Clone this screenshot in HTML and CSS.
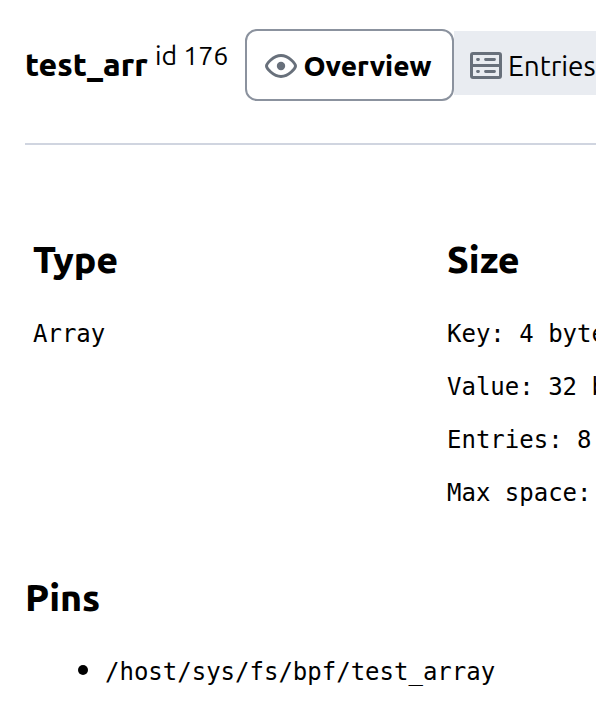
FILE: index.html
```html
<!DOCTYPE html>
<html lang="en">
<head>
<meta charset="utf-8">
<title>test_arr</title>
<link rel="stylesheet" href="styles.css">
</head>
<body>
<header class="head">
  <h1 class="name">test_arr</h1>
  <span class="map-id">id 176</span>
  <nav class="tabs">
    <a class="tab active">
      <svg class="icon" viewBox="0 0 32 32"><path d="M1.500 16C1.500 14 8 5.500 16 5.500S30.500 14 30.500 16C30.500 18 24 26.500 16 26.500S1.500 18 1.500 16Z"/><circle class="dot" cx="16" cy="16" r="4.200"/></svg>
      <span class="label">Overview</span>
    </a>
    <a class="tab entries">
      <svg class="icon" viewBox="0 0 32 32"><rect x="1.500" y="4.500" width="29" height="24" rx="1.500"/><path d="M1.500 16.500H30.500"/><path class="slots" d="M7.500 10.500H8.500M15.500 10.500H24.500M7.500 22.500H8.500M15.500 22.500H24.500"/></svg>
      <span class="label">Entries</span>
    </a>
  </nav>
</header>
<main>
  <div class="columns">
    <section><h2>Type</h2><p>Array</p></section>
    <section><h2>Size</h2><p>Key: 4 bytes</p><p>Value: 32 bytes</p><p>Entries: 8</p><p>Max space: 256 bytes</p></section>
  </div>
  <section class="pins"><h2>Pins</h2><ul><li><code>/host/sys/fs/bpf/test_array</code></li></ul></section>
</main>
</body>
</html>
```
FILE: styles.css
```css
* { box-sizing: border-box; }
body { margin: 0; height: 721px; overflow: hidden; background: #fff; color: #000; font-family: Ubuntu, "Noto Sans", sans-serif; }
.head { display: flex; height: 145px; margin-left: 25px; padding-top: 29px; border-bottom: 2px solid #d0d5e0; white-space: nowrap; overflow: hidden; }
.name { flex: none; width: 130px; margin: 0; font-size: 32px; line-height: 70px; font-weight: 800; }
.map-id { flex: none; width: 90px; font-size: 26.700px; line-height: 52px; font-weight: 440; }
.tabs { display: flex; flex: none; }
.tab { display: flex; flex: none; align-items: center; font-size: 28px; font-weight: 440; }
.active { width: 209px; height: 72px; padding: 2px 0 0 18px; gap: 6.500px; border: 2px solid #8b929e; border-radius: 12px; background: #fff; font-weight: 800; }
.active .label { margin-bottom: 2px; }
.entries { height: 64px; margin-top: 2px; width: 200px; padding: 4px 0 0 16px; gap: 6px; background: #e9ecf1; }
.icon { width: 32px; height: 32px; flex: none; fill: none; stroke: #68707b; stroke-width: 3; }
.dot { fill: #68707b; stroke: none; }
.slots { stroke-linecap: round; stroke-width: 2.800; }
.columns { display: grid; grid-template-columns: 414px 414px; padding: 89px 0 0 33px; overflow: hidden; }
h2 { margin: 0; font-size: 37.500px; line-height: 50px; font-weight: 800; }
p, li code { font-family: "DejaVu Sans Mono", monospace; font-size: 24px; line-height: 29px; white-space: nowrap; }
p { margin: 0 0 24px; }
.columns h2 { margin-bottom: 36px; }
.pins { padding: 40px 0 0 25px; }
.pins ul { margin: 29px 0 0; padding-left: 80px; font-size: 28px; line-height: 34px; }
.pins li::marker { font-size: 33px; }
```
